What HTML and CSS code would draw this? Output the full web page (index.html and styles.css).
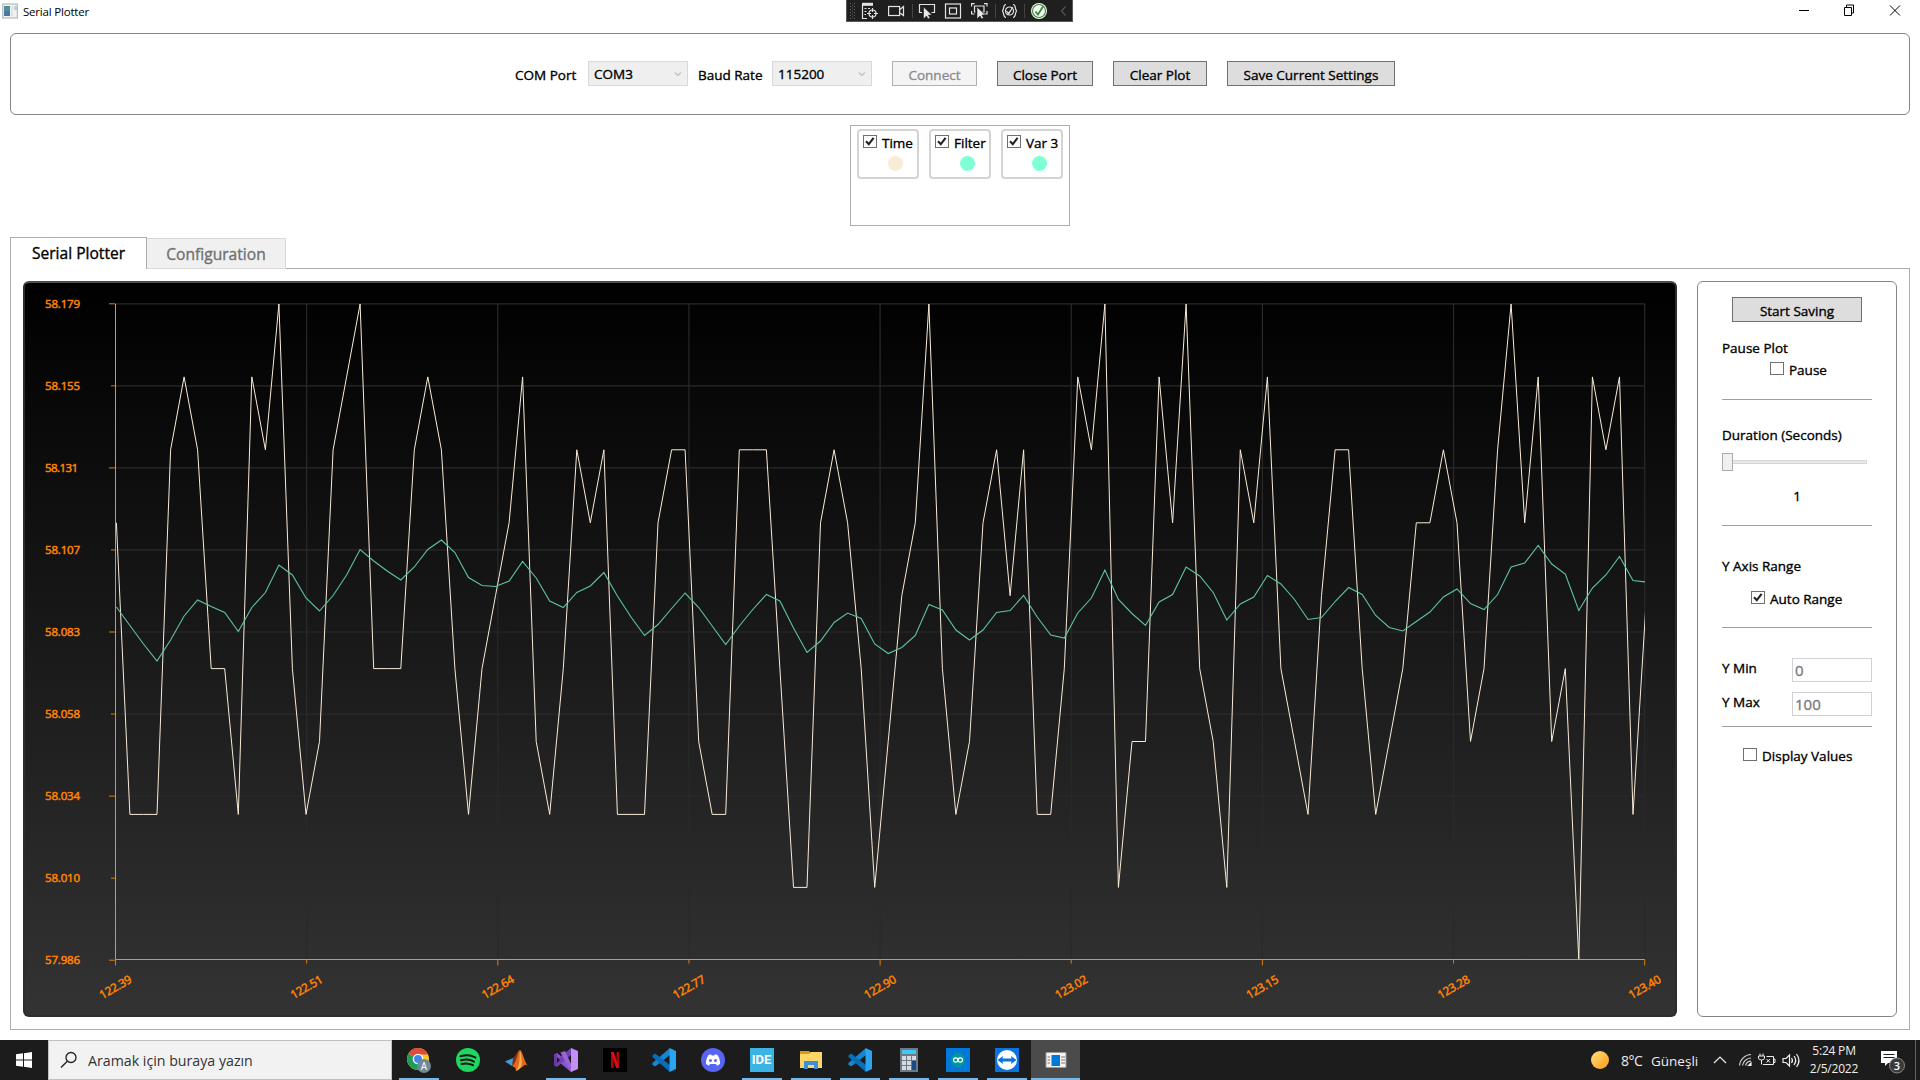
FILE: index.html
```html
<!DOCTYPE html>
<html lang="en">
<head>
<meta charset="utf-8">
<title>Serial Plotter</title>
<link rel="stylesheet" href="styles.css">
</head>
<body>
<svg width="0" height="0" class="defs">
  <defs>
    <linearGradient id="sun" x1="0" y1="0" x2="1" y2="1"><stop offset="0" stop-color="#ffe27a"/><stop offset="1" stop-color="#ff9a1a"/></linearGradient>
    <symbol id="check" viewBox="0 0 14 13"><path d="M3 6.2 5.8 9.2 10.6 2.8" fill="none" stroke="#212121" stroke-width="2"/></symbol>
    <symbol id="vscode" viewBox="0 0 24 24"><path d="M18 0v7L3.500 18.200 2 18 .4 16.300v-1.200z" fill="#1487d4"/><path d="M18 24v-7L3.500 5.800 2 6 .4 7.700v1.200z" fill="#0b6cb8"/><path d="M17.500 0 24 3v18l-6.500 3z" fill="#2ba5f0"/></symbol>
  </defs>
</svg>

<header class="titlebar">
  <svg class="app-icon" width="16" height="16" viewBox="0 0 16 16"><rect x=".7" y="1" width="14.6" height="14" fill="#f1f1f1" stroke="#a9b0b5"/><rect x="2" y="3" width="6" height="10" fill="#4f8f9d"/><path d="M2 8h6v5H2z" fill="#4b77a5"/><path d="M9 3h2v10H9z" fill="#e2e2e2"/><path d="M12 3h3v4h-3z" fill="#b5d5da"/></svg>
  <span class="title">Serial Plotter</span>
  <svg class="debugbar" width="227" height="22" viewBox="0 0 227 22">
    <rect x=".5" y="-.5" width="226" height="22" fill="#1f1f1f" stroke="#5a5a5a"/>
    <path d="M4.500 3v17M8.500 3v17" stroke="#666" stroke-dasharray="1 2"/><path d="M6.500 4.500v15" stroke="#666" stroke-dasharray="1 2"/>
    <g fill="none" stroke="#e4e4e4" stroke-width="1.200">
      <path d="M16 4.300h11" stroke-width="3"/><path d="M16.500 5v13.500h4.500M18.500 8.500h2M18.500 11.500h2M18.500 14.500h1.500M22 8.500h2"/><circle cx="26.500" cy="13.500" r="3.500"/><path d="M26.500 8v4M26.500 15v4M21 13.500h4M28 13.500h4"/>
      <rect x="42.600" y="6.500" width="11" height="9"/><path d="M54 9.500 57.500 6.500v9l-3.500-2.500"/>
      <path d="M76 12.500h-2.500V4.500h15v8h-3"/>
      <rect x="99.500" y="4" width="15" height="14"/><rect x="103.500" y="8" width="7" height="6"/>
      <path d="M125.600 6.500V3.600h3M138 3.600h3V6.500M125.600 11v3h3M141 11v3h-3M129.500 12h-1V6h9.500v6h-1.500"/>
      <path d="M160 4.500c-3 0-1.500 3.500-3.500 6.500 2 3 .5 6.500 3.500 6.500M167 4.500c3 0 1.500 3.500 3.500 6.500-2 3-.5 6.500-3.500 6.500M160.500 11l2.200 3 4-7M161 15l5.500-7"/><circle cx="163.500" cy="11" r="4"/>
    </g>
    <path d="M77.500 7v12l3-3 1.500 3 2-1-1.500-3H86zM131 7v12l3-3 1.500 3 2-1-1.500-3h3.500z" fill="#e8e8e8" stroke="#1f1f1f" stroke-width=".6"/>
    <path d="M66.500 4v14M149.500 4v14M178.500 4v14" stroke="#444"/>
    <circle cx="193" cy="11" r="8" fill="#f2f7f2"/><circle cx="193" cy="11" r="6.500" fill="none" stroke="#388a34" stroke-width="1.100"/><path d="M189.500 11.500 192 14.500 197 6.500" fill="none" stroke="#388a34" stroke-width="1.800"/>
    <path d="M219.500 6.500 215.500 11l4 4.500" fill="none" stroke="#555" stroke-width="1.200"/>
  </svg>
  <svg class="win-buttons" width="120" height="22" viewBox="0 0 120 22" fill="none" stroke="#000"><path d="M7 10.500h10M52.500 7.500h7v8h-7zM54.500 7v-2h7v8h-2M98 5.500l10 10M108 5.500l-10 10"/></svg>
</header>

<section class="port-panel">
  <span class="w-com">COM Port</span>
  <div class="combo"><span>COM3</span><svg width="8" height="6" viewBox="0 0 8 6"><path d="M1 1.500 4 4.500 7 1.500" fill="none" stroke="#bfbfbf" stroke-width="1.200"/></svg></div>
  <span class="w-baud">Baud Rate</span>
  <div class="combo"><span>115200</span><svg width="8" height="6" viewBox="0 0 8 6"><path d="M1 1.500 4 4.500 7 1.500" fill="none" stroke="#bfbfbf" stroke-width="1.200"/></svg></div>
  <div class="btn connect off">Connect</div>
  <div class="btn close">Close Port</div>
  <div class="btn clear">Clear Plot</div>
  <div class="btn save">Save Current Settings</div>
</section>

<section class="legend">
  <div class="series"><div class="opt"><i class="box"><svg width="14" height="13"><use href="#check"/></svg></i><span>Time</span></div><b class="dot cream"></b></div>
  <div class="series"><div class="opt"><i class="box"><svg width="14" height="13"><use href="#check"/></svg></i><span>Filter</span></div><b class="dot"></b></div>
  <div class="series"><div class="opt"><i class="box"><svg width="14" height="13"><use href="#check"/></svg></i><span>Var 3</span></div><b class="dot"></b></div>
</section>

<nav class="tabs"><div class="tab on">Serial Plotter</div><div class="tab">Configuration</div></nav>

<main class="content">
  <div class="chart"><svg id="plot" width="1650" height="732" viewBox="25 283 1650 732"></svg></div>
  <aside class="side">
    <div class="btn start">Start Saving</div>
    <div class="label l-pause">Pause Plot</div>
    <div class="opt o-pause"><i class="box"></i><span>Pause</span></div>
    <hr class="h1">
    <div class="label l-dur">Duration (Seconds)</div>
    <div class="slider"><i class="thumb"></i><i class="track"></i></div>
    <div class="value">1</div>
    <hr class="h2">
    <div class="label l-axis">Y Axis Range</div>
    <div class="opt o-auto"><i class="box"><svg width="14" height="13"><use href="#check"/></svg></i><span>Auto Range</span></div>
    <hr class="h3">
    <div class="field f1"><span>Y Min</span><div class="input">0</div></div>
    <div class="field"><span>Y Max</span><div class="input">100</div></div>
    <hr>
    <div class="opt o-disp"><i class="box"></i><span>Display Values</span></div>
  </aside>
</main>

<footer class="taskbar">
  <div class="start-menu"><svg width="16" height="16" viewBox="0 0 16 16"><path d="M0 2.300 7 1.300v6.200H0zM8 1.200 16 0v7.500H8zM0 8.500h7v6.200l-7-1zM8 8.500h8V16l-8-1.200z" fill="#fff"/></svg></div>
  <div class="search"><svg width="18" height="18" viewBox="0 0 18 18"><circle cx="11" cy="6.500" r="5" fill="none" stroke="#222" stroke-width="1.300"/><path d="M7.300 10.200 1 16.500" stroke="#222" stroke-width="1.400"/></svg><span>Aramak için buraya yazın</span></div>
  <div class="apps">
    <div class="app run"><svg width="26" height="26" viewBox="0 0 26 26"><circle cx="12" cy="12" r="11" fill="#fbc52d"/><path d="M12 12 2.500 6.500A11 11 0 0 0 11.500 23L17 14z" fill="#1f9d57"/><path d="M12 12 2.500 6.500A11 11 0 0 1 22 7.500H12z" fill="#dd4b3e"/><circle cx="12" cy="12" r="5.300" fill="#fff"/><circle cx="12" cy="12" r="4" fill="#4285f4"/><circle cx="18" cy="19" r="7" fill="#6f8895"/><text x="18" y="22.500" text-anchor="middle" font-size="10" fill="#fff">A</text></svg></div>
    <div class="app"><svg width="24" height="24" viewBox="0 0 24 24"><circle cx="12" cy="12" r="12" fill="#1ed760"/><path d="M4.500 8.200c5-1.600 11-1 15 1.300M5 12.300c4.500-1.300 9.500-.8 13 1.300M5.500 16c4-1 8-.6 11.500 1.200" fill="none" stroke="#191414" stroke-width="2" stroke-linecap="round"/></svg></div>
    <div class="app"><svg width="24" height="24" viewBox="0 0 24 24"><path d="M0 13.500 8 10l4 3-5 5z" fill="#3aa0d8"/><path d="M8 10c3-2 4-8 7-8l-4 14-4 2z" fill="#8c2a16"/><path d="M15 2c3 2 4 11 8 16-3-3-4 0-6 1s-3 3-6 4c0-4-2-4-4-5 5-3 5-14 8-16z" fill="#e06a20"/><path d="M15 2c-1 6 1 14-4 21 3-1 4-3 5-4C18 14 16 6 15 2z" fill="#f5b04a"/></svg></div>
    <div class="app run"><svg width="24" height="24" viewBox="0 0 24 24"><path d="M0 6.500 3 5l14 11v8L3 12.500 0 14z" fill="#8a54cc"/><path d="M0 6.500 3 5v14l-3-1.500z" fill="#6a3aa6"/><path d="M3 19 17 7V0L3 12z" fill="#7343ad"/><path d="M6.500 4.500 11 3l8 17-2 4z" fill="#9a63dc"/><path d="M17 0 24 3v18l-7 3z" fill="#c290f5"/><path d="M3 9v6l3-3z" fill="#1c1c1c"/></svg></div>
    <div class="app"><svg width="24" height="24" viewBox="0 0 24 24"><path d="M0 0h24v24H0z"/><path d="M8 4h2.500v16H8zM13.500 4H16v16h-2.500z" fill="#a90811"/><path d="M8 4h2.800L16 20h-2.800z" fill="#e50914"/></svg></div>
    <div class="app"><svg width="24" height="24"><use href="#vscode"/></svg></div>
    <div class="app"><svg width="24" height="24" viewBox="0 0 24 24"><circle cx="12" cy="12" r="12" fill="#5865f2"/><path d="M7.500 7 10 6.300l.7 1.200h2.600l.7-1.200 2.500.7c2 3 2.800 6 2.500 9l-3 1.700-1-1.700h-6l-1 1.700L5 16c-.3-3 .5-6 2.500-9z" fill="#fff"/><circle cx="9.500" cy="12.500" r="1.500" fill="#5865f2"/><circle cx="14.500" cy="12.500" r="1.500" fill="#5865f2"/></svg></div>
    <div class="app run"><div class="ide">IDE</div></div>
    <div class="app run"><svg width="24" height="24" viewBox="0 0 24 24"><path d="M1 3h9l2 2v4H1z" fill="#d99a12"/><path d="M1 6h9l2-2h11v16H1z" fill="#ffd766"/><path d="M5 13h14v8h-4v-4H9v4H5z" fill="#3f8fd8"/></svg></div>
    <div class="app run"><svg width="24" height="24"><use href="#vscode"/></svg></div>
    <div class="app run"><svg width="24" height="24" viewBox="0 0 24 24"><path d="M3 0h18v24H3z" fill="#6d7984"/><path d="M5 2h14v4H5z" fill="#40c8f4"/><path d="M5 8h4v4H5zM10 8h4v4h-4zM15 8h4v4h-4zM5 13h4v4H5zM10 13h4v4h-4zM5 18h4v4H5zM10 18h4v4h-4z" fill="#d5dbe0"/><path d="M15 13h4v9h-4z" fill="#164a8c"/></svg></div>
    <div class="app run"><svg width="24" height="24" viewBox="0 0 24 24"><path d="M0 0h24v24H0z" fill="#0078d7"/><circle cx="12" cy="12" r="7" fill="#00979d"/><g fill="none" stroke="#fff" stroke-width="1.200"><circle cx="9.700" cy="12" r="2.200"/><circle cx="14.300" cy="12" r="2.200"/></g></svg></div>
    <div class="app run"><svg width="24" height="24" viewBox="0 0 24 24"><path d="M0 0h24v24H0z" fill="#0b74dc"/><circle cx="12" cy="12" r="10" fill="#fff"/><path d="M2.500 12 8 8l-.5 2.500h9L16 8l5.500 4L16 16l.5-2.500h-9L8 16z" fill="#0b74dc"/></svg></div>
    <div class="app run active"><svg width="24" height="24" viewBox="0 0 24 24"><path d="M2 4.500h20v15H2z" fill="#f4f4f4" stroke="#999"/><path d="M7.500 7h8.500v11H7.500z" fill="#0078d7"/><path d="M3.500 9H6M3.500 12H6M3.500 15H6M17 9h4M17 12h4M17 15h4" stroke="#777"/></svg></div>
  </div>
  <div class="weather"><svg width="18" height="18"><circle cx="9" cy="9" r="9" fill="url(#sun)"/></svg><span class="temp">8°C</span><span class="cond">Güneşli</span></div>
  <svg class="tray" width="94" height="20" viewBox="0 0 94 20" fill="none" stroke="#eee" stroke-width="1.200">
    <path d="M1 13 7 7l6 6"/>
    <path d="M26.500 15.500A12 12 0 0 1 38 4.500M29.500 15.500A9 9 0 0 1 38 8M32.500 15.500A6 6 0 0 1 38 11.200" stroke="#ccc"/><path d="M35.500 15.500 38 13v2.500z" fill="#fff"/>
    <path d="M48.500 3.500v2.500M51.500 3.500v2.500M47 6h6v2q0 2-3 2t-3-2zM50 10v4.500M55 6.500h7v8H51.500M62 9h1.500v3.500H62M55 9l3.500 3.500M58.500 9 55 12.500" transform="translate(-1.500 0)" stroke-width="1"/>
    <path d="M71.500 8.500h3L78 5v11l-3.500-3.500h-3zM80 8q2 2.500 0 5M82.500 6q3.500 4.500 0 9M85 4q5 6.500 0 13" transform="translate(-1.500 0)"/>
  </svg>
  <div class="clock"><span>5:24 PM</span><span>2/5/2022</span></div>
  <svg class="notify" width="28" height="28" viewBox="0 0 28 28"><path d="M2 5h16v12H9l-3 3v-3H2z" fill="#fff"/><path d="M4.500 8.500h11M4.500 11.500h11" stroke="#1c1c1c" stroke-width="1.200"/><circle cx="18" cy="19.500" r="7.500" fill="#3a3a3a" stroke="#888"/><text x="18" y="23.500" text-anchor="middle" font-size="11" font-weight="600" fill="#fff">3</text></svg>
  <i class="peek"></i>
</footer>
<script src="plot.js"></script>
</body>
</html>
```
FILE: styles.css
```css
* { box-sizing: border-box; }
body { margin: 0; width: 1920px; height: 1080px; overflow: hidden; background: #fff; color: #000; font: 400 13.5px/18px "Open Sans", "Noto Sans", sans-serif; display: flex; flex-direction: column; }
svg { display: block; flex: none; }
i { display: block; font-style: normal; }
.defs { position: absolute; }
.titlebar { height: 33px; display: flex; align-items: flex-start; flex: none; }
.app-icon { margin: 3px 0 0 2px; }
.title { width: 823px; margin: 3px 0 0 5px; font-size: 11.5px; letter-spacing: -0.2px; }
.debugbar { margin-right: 719px; }
.port-panel, .legend, .tabs, .side { -webkit-text-stroke: 0.35px currentColor; }
.port-panel { flex: none; height: 82px; margin: 0 10px; border: 1px solid #858585; border-radius: 6px; display: flex; align-items: flex-start; padding: 27px 0 0 504px; white-space: nowrap; }
.port-panel > span { padding-top: 5px; }
.w-com { width: 73px; }
.w-baud { width: 74px; margin-left: 10px; }
.combo { width: 100px; height: 25px; border: 1px solid #d9d9d9; background: #efefef; display: flex; align-items: center; justify-content: space-between; padding: 0 5px; }
.btn { height: 25px; border: 1px solid #707070; background: #ddd; text-align: center; line-height: 26px; white-space: nowrap; flex: none; }
.btn.off { border-color: #adb2b5; background: #f4f4f4; color: #8b8b8b; }
.connect { width: 85px; margin-left: 20px; }
.close { width: 96px; margin-left: 20px; }
.clear { width: 94px; margin-left: 20px; }
.save { width: 168px; margin-left: 20px; }
.legend { flex: none; width: 220px; height: 101px; margin: 10px 0 0 850px; border: 1px solid #abadb3; display: flex; gap: 10px; padding: 3px 0 0 6px; }
.series { width: 62px; height: 50px; border: 2px solid lightgray; border-radius: 4px; padding: 4px 0 0 4px; }
.opt { display: flex; align-items: flex-start; white-space: nowrap; height: 22px; gap: 5px; }
.box { width: 14px; height: 13px; border: 1px solid #707070; flex: none; background: #fff; }
.box svg { margin: -1px; }
.opt span { margin-top: -1px; }
.dot { display: block; width: 15px; height: 15px; border-radius: 50%; background: #7fffd4; margin: -1px 0 0 25px; }
.dot.cream { background: #faebd7; }
.tabs { flex: none; height: 32px; margin: 11px 0 0 10px; display: flex; align-items: flex-end; position: relative; font-size: 15.6px; }
.tab { width: 139px; height: 31px; border: 1px solid #d9d9d9; border-left: 0; background: #f0f0f0; color: #707070; text-align: center; line-height: 31px; }
.tab.on { width: 137px; height: 32px; border: 1px solid #acacac; border-bottom: 0; background: #fff; color: #000; }
.content { flex: none; height: 762px; margin: -1px 10px 0; border: 1px solid #acacac; display: flex; padding: 12px 0 0 12px; }
.chart { width: 1654px; height: 736px; border: 2px solid #2d2d2d; border-top-color: #4c4c4c; border-radius: 6px; overflow: hidden; background: linear-gradient(#000, #333); }
.chart text { fill: #ff8c0a; stroke: #ff8000; stroke-width: 0.5px; font-size: 11.5px; }
.side { width: 200px; height: 736px; margin-left: 20px; border: 1px solid #858585; border-radius: 6px; padding: 15px 24px 0; display: flex; flex-direction: column; }
.start { width: 130px; margin-left: 10px; }
.label { height: 18px; }
.l-pause { margin-top: 17px; }
.o-pause { margin: 5px 0 0 48px; }
hr { width: 150px; height: 1px; border: 0; margin: 0; background: #a0a0a0; flex: none; }
.h1 { margin-top: 15px; }
.l-dur { margin-top: 26px; }
.slider { display: flex; align-items: center; height: 18px; margin-top: 9px; }
.thumb { width: 11px; height: 18px; border: 1px solid #acacac; background: #f0f0f0; }
.track { width: 134px; height: 4px; border: 1px solid #d6d6d6; border-left: 0; background: #e7eaea; }
.value { text-align: center; margin-top: 16px; }
.h2 { margin-top: 20px; }
.l-axis { margin-top: 31px; }
.o-auto { margin: 16px 0 0 29px; }
.h3 { margin-top: 14px; }
.field { display: flex; justify-content: space-between; height: 24px; margin-bottom: 10px; }
.field span { margin-top: 1px; }
.f1 { margin-top: 30px; }
.input { width: 80px; height: 24px; border: 1px solid #cfd1d6; color: #7a7a7a; font-size: 15px; line-height: 23px; padding-left: 2px; }
.o-disp { margin: 21px 0 0 21px; }
.taskbar { flex: none; height: 40px; margin-top: 10px; background: #1c1c1c; color: #eee; display: flex; align-items: center; }
.taskbar > * { flex: none; }
.start-menu { width: 48px; padding-left: 16px; }
.search { width: 344px; height: 40px; background: #f2f2f2; border: 1px solid #c0c0c0; color: #333; display: flex; align-items: center; gap: 10px; padding-left: 11px; font-size: 14.2px; }
.search span { padding-top: 1px; }
.apps { display: flex; margin-left: 2px; }
.app { width: 49px; height: 40px; display: flex; align-items: center; justify-content: center; position: relative; }
.app.run::after { content: ""; position: absolute; left: 5px; width: 40px; bottom: 0; height: 2px; background: #76b9ed; }
.app.active { background: #4b4b4b; }
.app.active::after { left: 0; width: 49px; }
.ide { width: 24px; height: 24px; background: #3bb4e5; color: #fff; font: 700 13px/24px "Roboto", sans-serif; text-align: center; }
.weather { display: flex; align-items: center; margin-left: 511px; width: 122px; font-size: 14px; white-space: nowrap; }
.temp { width: 30px; margin-left: 12px; letter-spacing: -0.5px; }
.cond { font-size: 13.5px; }
.temp, .cond { padding-top: 2px; }
.clock { width: 70px; margin-left: -8px; display: flex; flex-direction: column; align-items: center; font-size: 12px; line-height: 18px; letter-spacing: -0.2px; }
.notify { margin-left: 10px; }
.peek { width: 1px; height: 40px; background: #666; margin: 0 4px 0 auto; }
```
FILE: plot.js
```js
// Raw samples sit on quantised levels (0 = top of the axis, 9 = bottom), ten per group.
const raw = '3777212557 1205762105 5521257543 1675232777 3226772225 8832358643 0576324277 5120866130 5682315674 2257653323 6520316591 2174';
const samples = [...raw.replace(/ /g, '')].map(Number);
const filtered = [607,625.5,644,661,640,616,600,606.5,612.5,631.5,607.5,592.5,565,575,598,611,595.5,575,549.5,561,571,580,567,549.5,540,552.5,577.5,585.5,586.5,581,561.5,578,601,607.5,592.5,586,572.5,596,617,635.5,624.5,608.5,593,607.5,626,644.5,626,609.5,594.5,601,628,652.5,641,622.5,613,618.5,644,653.5,647.5,635.5,604.5,610,630,640,630,612.5,610.5,595.5,617,635,638,613,598,570,599.5,613.5,625.5,602,594.5,567,576,592.5,620,604,597,575.5,584,599.5,619.5,617.5,601.5,587.5,594.5,615.5,627.5,631,621.5,612,597,589,603.5,609.5,594.5,567,563,545.5,564,574,610.5,588,575,556.5,580.5,582];
const left = 115.5, right = 1644.8, top0 = 303.8, bottom = 959.5;
const px = i => (116.4 + i * 13.541).toFixed(1);
const line = (x1, y1, x2, y2, c, w = 1) => `<line x1="${x1}" y1="${y1}" x2="${x2}" y2="${y2}" stroke="${c}" stroke-width="${w}"/>`;
const yText = ['58.179', '58.155', '58.131', '58.107', '58.083', '58.058', '58.034', '58.010', '57.986'];
const xText = ['122.39', '122.51', '122.64', '122.77', '122.90', '123.02', '123.15', '123.28', '123.40'];
let out = '<clipPath id="area"><rect x="115" y="303" width="1530" height="656"/></clipPath>';
for (let i = 0; i < 9; i++) {
  const y = top0 + i * 82.05, x = left + i * 191.15;
  if (i < 8) out += line(left, y, right, y, '#2a2a2a', 1.2);
  if (i > 0) out += line(x, top0, x, bottom, '#2a2a2a', 1.2);
  out += line(i % 2 ? 111 : 109, y, 115, y, '#e07b0a');
  out += line(x, bottom, x, bottom + (i % 2 ? 4 : 6), '#e07b0a');
  out += `<text x="45" y="${y + 4}" textLength="${i === 2 ? 33 : 35}">${yText[i]}</text>`;
  out += `<text transform="translate(${x} 987) rotate(-30)" text-anchor="middle" y="4" textLength="35">${xText[i]}</text>`;
}
out += line(left, top0, left, bottom, '#ff8c0a') + line(left, bottom, right, bottom, '#ff8c0a');
out += `<g clip-path="url(#area)" fill="none"><polyline stroke="#faebd7" stroke-width="1" points="${samples.map((v, i) => px(i) + ',' + (304 + v * 72.92).toFixed(1)).join(' ')}"/>`;
out += `<polyline stroke="#5ec4a2" stroke-width="1.1" points="${filtered.map((y, i) => px(i) + ',' + y).join(' ')}"/></g>`;
document.getElementById('plot').innerHTML = out;
```
